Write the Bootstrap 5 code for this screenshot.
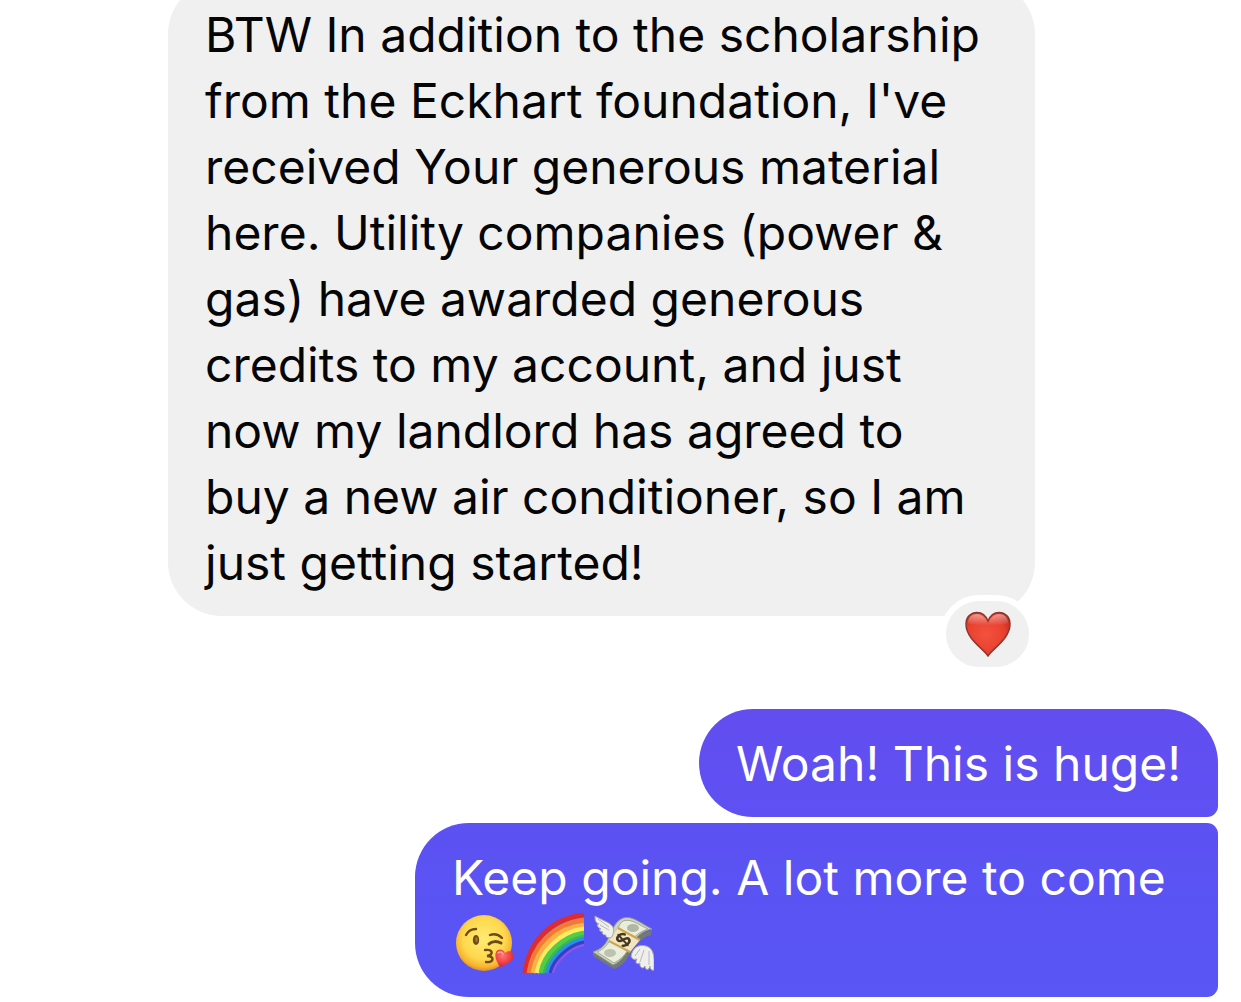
<!DOCTYPE html>
<html lang="en">
<head>
<meta charset="utf-8">
<meta name="viewport" content="width=device-width, initial-scale=1">
<title>Conversation</title>
<link href="https://cdn.jsdelivr.net/npm/bootstrap@5.3.0/dist/css/bootstrap.min.css" rel="stylesheet">
<style>
body { background: #fff; font-family: Inter, "Liberation Sans", sans-serif; }
.thread { padding: 0 23px 5px 168px; gap: 6px; }
.bubble { font-size: 48px; line-height: 66px; padding: 22px 37px 20px; border-radius: 54px; }
.incoming { background: #f0f0f0; color: #050505; width: 867px; max-width: 100%; margin-bottom: 87px; }
.outgoing { color: #fff; max-width: 803px; }
.first { background: linear-gradient(#634df0, #5e51f3); border-bottom-right-radius: 11px; }
.last { background: linear-gradient(#5c51f2, #5856f5); border-top-right-radius: 11px; border-bottom-right-radius: 11px; }
.reaction { right: 0; bottom: -57px; width: 95px; height: 78px; border: 6px solid #fff; border-radius: 39px; background: #f0f0f0; }
.emoji-row { height: 66px; gap: 8px; }
</style>
</head>
<body>
<main class="thread vh-100 overflow-hidden d-flex flex-column justify-content-end">
  <div class="bubble incoming position-relative flex-shrink-0 align-self-start">
    BTW In addition to the scholarship<br>from the Eckhart foundation, I've<br>received Your generous material<br>here. Utility companies (power &amp;<br>gas) have awarded generous<br>credits to my account, and just<br>now my landlord has agreed to<br>buy a new air conditioner, so I am<br>just getting started!
    <span class="reaction position-absolute d-flex align-items-center justify-content-center">
      <svg width="48" height="46" viewBox="0 0 48 46" role="img" aria-label="Red heart">
        <defs>
          <radialGradient id="heartFill" cx=".45" cy=".5" r=".65"><stop offset="0" stop-color="#f4523f"/><stop offset=".65" stop-color="#e8402f"/><stop offset="1" stop-color="#b92b20"/></radialGradient>
          <linearGradient id="heartShine" x2="0" y2="1"><stop offset="0" stop-color="#fff" stop-opacity=".5"/><stop offset="1" stop-color="#fff" stop-opacity="0"/></linearGradient>
        </defs>
        <path d="M24 45C20 38 2 28 2 13 2 6 7 1.500 13 1.500c5 0 9 3.500 11 8.500 2-5 6-8.500 11-8.500 6 0 11 4.500 11 11.500 0 15-18 25-22 32z" fill="url(#heartFill)" stroke="#92352b" stroke-width="1.500"/>
        <path d="M4 12C4 6 8 3 13 3c5 0 9 4 11 9 2-5 6-9 11-9 5 0 9 3 9 9-6 3-34 3-40 0z" fill="url(#heartShine)"/>
      </svg>
    </span>
  </div>
  <div class="bubble outgoing first flex-shrink-0 align-self-end">Woah! This is huge!</div>
  <div class="bubble outgoing last flex-shrink-0 align-self-end w-100">
    Keep going. A lot more to come
    <div class="emoji-row d-flex align-items-center">
      <svg width="62" height="62" viewBox="0 0 62 62" role="img" aria-label="Face blowing a kiss">
        <defs>
          <radialGradient id="faceFill" cx=".5" cy=".42" r=".58"><stop offset="0" stop-color="#ffeb72"/><stop offset=".65" stop-color="#fed84d"/><stop offset=".88" stop-color="#f7b42f"/><stop offset="1" stop-color="#dd8d26"/></radialGradient>
          <radialGradient id="kissHeart" cx=".4" cy=".35" r=".75"><stop offset="0" stop-color="#ff7770"/><stop offset=".6" stop-color="#ed3b44"/><stop offset="1" stop-color="#b91f38"/></radialGradient>
        </defs>
        <circle cx="32" cy="30" r="28" fill="url(#faceFill)"/>
        <g fill="none" stroke="#6f4b17" stroke-width="2.400" stroke-linecap="round">
          <path d="M14 22c2-4 6-6 10-6M38 22c5-2 9 0 12 3"/>
          <path d="M37 31c3-3 8-3 12-1" stroke-width="3"/>
          <path d="M33 37c8-1 9 5 2 6 8 0 7 7-1 6"/>
        </g>
        <ellipse cx="24" cy="27" rx="3.200" ry="5" fill="#6f4b17"/>
        <ellipse cx="24.500" cy="26.500" rx="1.200" ry="2.500" fill="#a67a2c"/>
        <path d="M48 54c-3-5-6-10-4-15 2-4 8-3 9 1 3-3 8-2 9 2 0 6-8 10-14 12z" fill="url(#kissHeart)"/>
        <path d="M46 40c2-2 4-1 5 1" fill="none" stroke="#ffaba2" stroke-width="1.500" stroke-linecap="round"/>
      </svg>
      <svg width="62" height="62" viewBox="0 0 62 62" role="img" aria-label="Rainbow">
        <g fill="none" stroke-width="5">
          <path d="M3 60C7 30 27 6 62 2" stroke="#dc2c32"/>
          <path d="M7 60C11 33 31 11 62 7" stroke="#f27a34"/>
          <path d="M11 60C15 36 34 15 62 12" stroke="#fbb044"/>
          <path d="M15 60C19 39 37 19 62 16" stroke="#fdec60"/>
          <path d="M19 60C22 41 40 24 62 20" stroke="#55cc48"/>
          <path d="M22 60C26 43 43 27 62 23" stroke="#36b950" stroke-width="3"/>
          <path d="M25 60C29 45 45 29 62 26" stroke="#2d8ee5" stroke-width="4"/>
          <path d="M28 60C31 46 47 32 62 29" stroke="#3140c7" stroke-width="3"/>
          <path d="M31 60C34 48 48 35 62 32" stroke="#9256e5" stroke-width="2"/>
        </g>
      </svg>
      <svg width="62" height="62" viewBox="0 0 62 62" role="img" aria-label="Money with wings">
        <path d="M1 38v5l21 13c9-3 13-10 17-17 5-8 11-15 20-17l1-5z" fill="#737b70"/>
        <path d="M29 6c10-5 19 4 31 10-11 2-17 9-22 17-5 9-9 16-17 19L1 39c12-4 14-11 18-19 3-7 5-11 10-14z" fill="#ced2c0" stroke="#8f9788"/>
        <path d="M31 8c8-3 16 4 25 8-7 2-12 6-16 11L25 17c2-4 3-7 6-9zM5 39c7-3 10-7 13-12l18 10c-4 6-8 10-14 13z" fill="#e9eddb" stroke="#a2a997"/>
        <ellipse cx="41" cy="15" rx="6" ry="4" fill="#b0b7a4"/><ellipse cx="18" cy="40" rx="6" ry="4" fill="#bbc2ae"/>
        <path d="M26 15l22 12-10 12-21-11z" fill="#f2e5bf"/>
        <path d="M26 15l22 12M17 28l21 11" stroke="#cba653" stroke-width="2"/>
        <g fill="none" stroke="#44391f" stroke-width="2.500" stroke-linecap="round" transform="rotate(-42 31 27)">
          <path d="M36 24c-2-4-9-4-9 0s9 2 9 6-7 4-9 1"/><path d="M31 20v14" stroke-width="2"/>
        </g>
        <g fill="#efefeb" stroke="#aaa9ac">
          <path d="M20 24C26 10 14 10 3 3c0 5 1 7 4 8-3 0-2 3 2 5-3 0-1 3 2 3-2 2 1 3 3 3-1 2 3 4 6 2z"/>
          <path d="M39 43c2-9 8-12 15-10 7 2 9 9 8 24-3 1-4-2-4-4-1 5-5 4-5 0-2 4-6 1-5-3-4 2-5-1-3-4-3 1-5 0-6-3z"/>
        </g>
        <path d="M6 6l11 8M8 12l9 5M48 36l-5 7M52 37l-4 12M57 38v14" fill="none" stroke="#b9b8ba"/>
      </svg>
    </div>
  </div>
</main>
<script src="https://cdn.jsdelivr.net/npm/bootstrap@5.3.0/dist/js/bootstrap.bundle.min.js"></script>
</body>
</html>
